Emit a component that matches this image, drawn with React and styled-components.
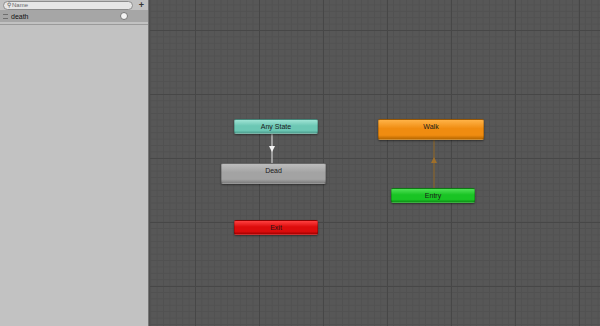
import styled, { createGlobalStyle } from "styled-components"

const Global = createGlobalStyle`
    html, body {
        margin: 0;
        padding: 0;
        width: 600px;
        height: 326px;
        overflow: hidden;
        background: #555555;
        font-family: "Liberation Sans", Arial, sans-serif;
    }
`

const nodes = [
    { name: "Any State", x: 234, y: 119, w: 84, h: 15, kind: "any" },
    { name: "Dead", x: 221, y: 163, w: 105, h: 21, kind: "dead" },
    { name: "Walk", x: 378, y: 119, w: 106, h: 21, kind: "walk" },
    { name: "Entry", x: 391, y: 188, w: 84, h: 15, kind: "entry" },
    { name: "Exit", x: 234, y: 220, w: 84, h: 15, kind: "exit" },
]

const colors = {
    any: ["#9fe3d4", "#6cc7b4", "#4e9f8f"],
    dead: ["#bdbdbd", "#a3a3a3", "#7e7e7e"],
    walk: ["#ffb347", "#f08c10", "#b86800"],
    entry: ["#4fe055", "#19c424", "#0f8f17"],
    exit: ["#ff4040", "#dd0c0c", "#a30000"],
}

export default function App(){
    return(
        <>
            <Global />
            <Window>
                <Sidebar>
                    <SearchRow>
                        <SearchField>
                            <SearchIcon>⚲</SearchIcon>
                            <Placeholder>Name</Placeholder>
                        </SearchField>
                        <PlusButton>+</PlusButton>
                    </SearchRow>
                    <ParamRow>
                        <Handle />
                        <ParamName>death</ParamName>
                        <Radio />
                    </ParamRow>
                    <Separator />
                </Sidebar>
                <Divider />
                <Graph>
                    <svg width="450" height="326" style={{ position: "absolute", left: 0, top: 0 }}>
                        <line x1="122" y1="134" x2="122" y2="163" stroke="#e8e8e8" strokeWidth="1" />
                        <polygon points="119,146 125,146 122,152" fill="#f4f4f4" />
                        <line x1="284" y1="140" x2="284" y2="188" stroke="#7d6034" strokeWidth="1.5" />
                        <polygon points="281,163 287,163 284,157" fill="#a0702a" />
                    </svg>
                    {nodes.map((n) => (
                        <Node
                            key={n.name}
                            $c={colors[n.kind]}
                            style={{ left: n.x - 150, top: n.y, width: n.w, height: n.h }}
                        >
                            {n.name}
                        </Node>
                    ))}
                </Graph>
            </Window>
        </>
    )
}

const Window = styled.div`
    display: flex;
    width: 600px;
    height: 326px;
`

const Sidebar = styled.div`
    width: 148px;
    height: 100%;
    background: #c2c2c2;
    display: flex;
    flex-direction: column;
`

const SearchRow = styled.div`
    display: flex;
    align-items: center;
    height: 10px;
    padding: 0 4px 0 3px;
    gap: 6px;
`

const SearchField = styled.div`
    flex: 1;
    height: 7px;
    background: #e6e6e6;
    border: 1px solid #8c8c8c;
    border-radius: 5px;
    display: flex;
    align-items: center;
    padding-left: 3px;
    font-size: 6px;
    color: #555;
    line-height: 1;
`

const SearchIcon = styled.span`
    font-size: 6px;
    margin-right: 1px;
`

const Placeholder = styled.span`
    font-size: 6px;
    color: #666;
`

const PlusButton = styled.span`
    font-size: 9px;
    font-weight: bold;
    color: #333;
    line-height: 1;
`

const ParamRow = styled.div`
    display: flex;
    align-items: center;
    height: 12px;
    background: #a6a6a6;
    padding: 0 20px 0 3px;
`

const Handle = styled.div`
    width: 5px;
    height: 3px;
    border-top: 1px solid #6e6e6e;
    border-bottom: 1px solid #6e6e6e;
    margin-right: 3px;
`

const ParamName = styled.span`
    flex: 1;
    font-size: 7px;
    color: #111;
`

const Radio = styled.div`
    width: 6px;
    height: 6px;
    border-radius: 50%;
    background: #f4f4f4;
    border: 1px solid #777;
`

const Separator = styled.div`
    height: 1px;
    margin-top: 2px;
    background: #9a9a9a;
`

const Divider = styled.div`
    width: 2px;
    height: 100%;
    background: linear-gradient(to right, #8a8a8a, #3a3a3a);
`

const Graph = styled.div`
    position: relative;
    flex: 1;
    height: 100%;
    background-color: #575757;
    background-image:
        linear-gradient(to right, #474747 1px, transparent 1px),
        linear-gradient(to bottom, #474747 1px, transparent 1px),
        linear-gradient(to right, #515151 1px, transparent 1px),
        linear-gradient(to bottom, #515151 1px, transparent 1px);
    background-size: 64px 64px, 64px 64px, 6.4px 6.4px, 6.4px 6.4px;
    background-position: 45px 30px, 45px 30px, 45px 30px, 45px 30px;
    overflow: hidden;
`

const Node = styled.div`
    position: absolute;
    box-sizing: border-box;
    display: flex;
    align-items: flex-start;
    justify-content: center;
    padding-top: 3px;
    font-size: 7px;
    color: #1a1a1a;
    border-radius: 2px;
    background: linear-gradient(to bottom, ${(p) => p.$c[0]}, ${(p) => p.$c[1]} 45%, ${(p) => p.$c[1]} 80%, ${(p) => p.$c[2]});
    box-shadow: 0 1px 2px rgba(0, 0, 0, 0.45);
    border: 1px solid rgba(0, 0, 0, 0.2);
`
